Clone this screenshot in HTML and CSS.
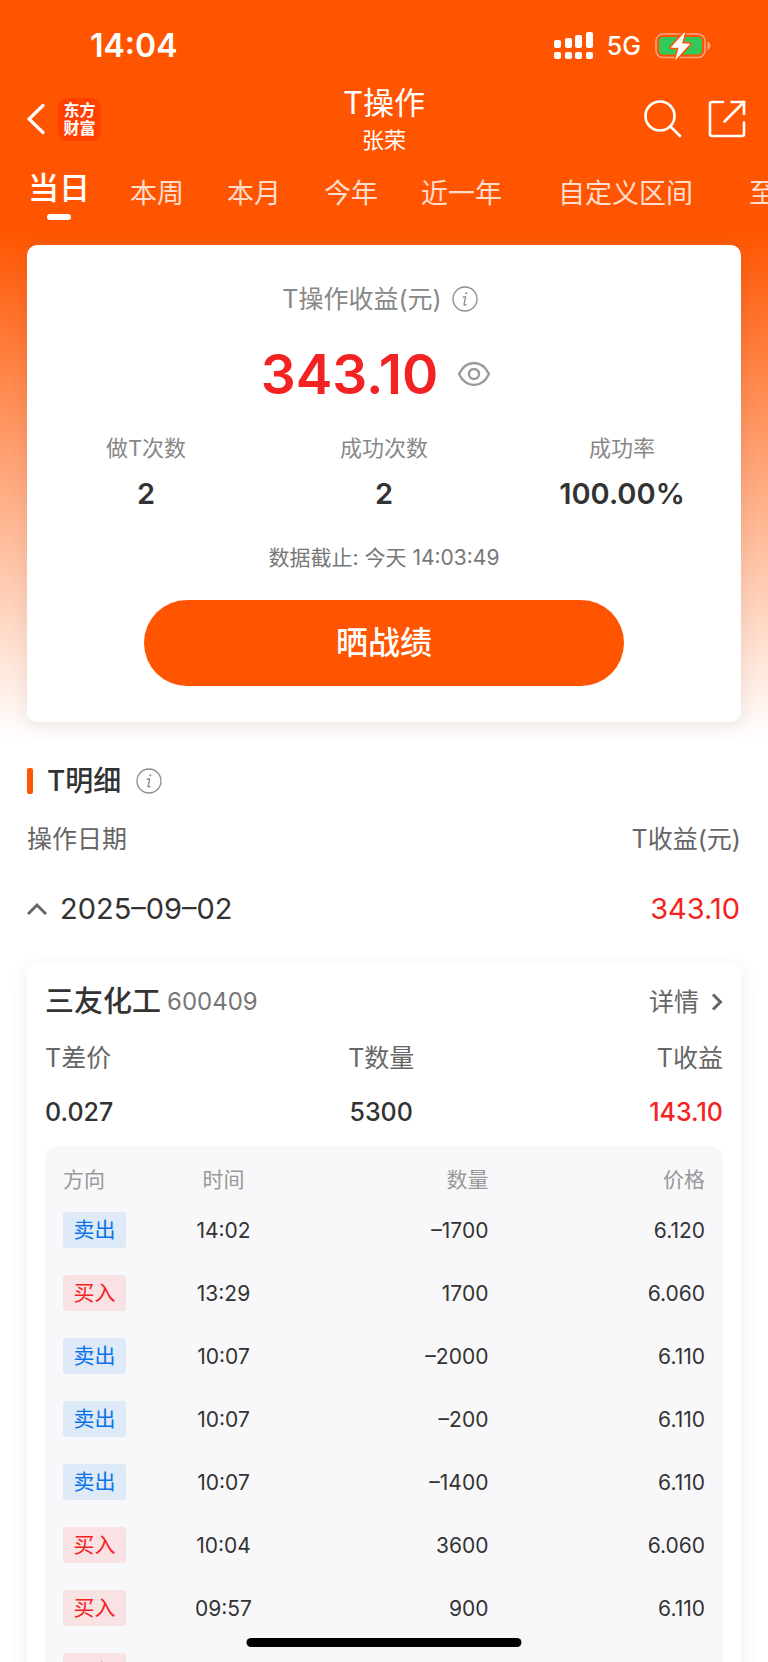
FILE: index.html
```html
<!DOCTYPE html>
<html lang="zh-CN">
<head>
<meta charset="utf-8">
<meta name="viewport" content="width=device-width, initial-scale=1">
<title>T操作</title>
<link rel="stylesheet" href="styles.css">
</head>
<body>
<div class="screen">
  <header class="status">
    <time class="clock">14:04</time>
    <div class="status-icons">
      <svg class="signal" width="40" height="28" viewBox="0 0 40 28" fill="#fff" aria-hidden="true">
        <rect x="0" y="8" width="7" height="8" rx="2"/><rect x="11" y="6" width="7" height="10" rx="2"/><rect x="21" y="3" width="7" height="13" rx="2"/><rect x="32" y="0" width="7" height="16" rx="2"/>
        <rect x="0" y="20" width="7" height="7" rx="2"/><rect x="11" y="20" width="7" height="7" rx="2"/><rect x="21" y="20" width="7" height="7" rx="2"/><rect x="32" y="20" width="7" height="7" rx="2"/>
      </svg>
      <span class="network">5G</span>
      <svg class="battery" width="56" height="28" viewBox="0 0 56 28" aria-hidden="true">
        <rect x="1" y="2" width="49" height="23.5" rx="7" fill="none" stroke="#ffa780" stroke-width="1.6"/>
        <path d="M52.5 9.5c4 1.500 4 7 0 8.500z" fill="#ffa780"/>
        <rect x="4" y="5" width="43" height="17.500" rx="4" fill="#34c759"/>
        <path d="M29.500 .8 16.500 15.300h7.800L20.800 27.200 34.500 12h-8z" fill="#fff" stroke="#ff5500" stroke-width="4" stroke-linejoin="round"/>
        <path d="M29.500 .8 16.500 15.300h7.800L20.800 27.200 34.500 12h-8z" fill="#fff" stroke="#fff" stroke-linejoin="round"/>
      </svg>
    </div>
  </header>

  <nav class="navbar">
    <div class="nav-side nav-left">
      <button class="icon-button" aria-label="返回">
        <svg width="18" height="32" viewBox="0 0 18 32" fill="none" stroke="#fff" stroke-width="3.200" stroke-linecap="round"><path d="M16 2.500 2 16 16 29.500"/></svg>
      </button>
      <a class="brand" href="#"><span>东方</span><span>财富</span></a>
    </div>
    <div class="heading">
      <h1>T操作</h1>
      <p>张荣</p>
    </div>
    <div class="nav-side nav-right">
      <button class="icon-button" aria-label="搜索">
        <svg width="38" height="38" viewBox="0 0 38 38" fill="none" stroke="#fff" stroke-width="2.600" stroke-linecap="round"><circle cx="16" cy="16" r="14.500"/><path d="M26.500 26.500 36 36"/></svg>
      </button>
      <button class="icon-button" aria-label="分享">
        <svg width="38" height="38" viewBox="0 0 38 38" fill="none" stroke="#fff" stroke-width="2.600" stroke-linecap="round" stroke-linejoin="round"><path d="M15 2H4Q2 2 2 4V34Q2 36 4 36H34Q36 36 36 34V22.500"/><path d="M23.500 2H36V14"/><path d="M36 2 16.500 21.500"/></svg>
      </button>
    </div>
  </nav>

  <div class="tabs" role="tablist">
    <button class="tab tab-active" role="tab" aria-selected="true">当日</button>
    <button class="tab" role="tab">本周</button>
    <button class="tab" role="tab">本月</button>
    <button class="tab" role="tab">今年</button>
    <button class="tab" role="tab">近一年</button>
    <button class="tab tab-range" role="tab">自定义区间</button>
    <button class="tab" role="tab">至今</button>
  </div>

  <main class="content">
    <section class="card summary">
      <div class="summary-title">
        <h2>T操作收益(元)</h2>
        <button class="icon-button" aria-label="收益说明">
          <svg width="26" height="26" viewBox="0 0 26 26" fill="none" stroke="#8c8c8c" stroke-width="1.300"><circle cx="13" cy="13" r="12"/><path d="M10.800 11h2.900L12 18.300q-.2 1 2.500 0" stroke-linejoin="round"/><circle cx="14.300" cy="7.300" r=".8" fill="#8c8c8c" stroke-width=".6"/></svg>
        </button>
      </div>
      <div class="amount">
        <strong>343.10</strong>
        <button class="icon-button" aria-label="隐藏金额">
          <svg width="34" height="26" viewBox="0 0 34 26" fill="none" stroke="#999" stroke-width="2.400"><path d="M2 13C5 7 10.500 2 17 2s12 5 15 11c-3 6-8.500 11-15 11S5 19 2 13z" stroke-linejoin="round"/><circle cx="17" cy="13" r="5"/></svg>
        </button>
      </div>
      <dl class="stats">
        <div><dt>做T次数</dt><dd>2</dd></div>
        <div><dt>成功次数</dt><dd>2</dd></div>
        <div><dt>成功率</dt><dd>100.00%</dd></div>
      </dl>
      <p class="as-of">数据截止: 今天 14:03:49</p>
      <button class="share-button">晒战绩</button>
    </section>

    <section class="detail">
      <div class="section-title">
        <h2>T明细</h2>
        <button class="icon-button" aria-label="明细说明">
          <svg width="26" height="26" viewBox="0 0 26 26" fill="none" stroke="#8c8c8c" stroke-width="1.300"><circle cx="13" cy="13" r="12"/><path d="M10.800 11h2.900L12 18.300q-.2 1 2.500 0" stroke-linejoin="round"/><circle cx="14.300" cy="7.300" r=".8" fill="#8c8c8c" stroke-width=".6"/></svg>
        </button>
      </div>
      <div class="list-head"><span>操作日期</span><span>T收益(元)</span></div>
      <button class="day" aria-expanded="true">
        <svg width="20" height="14" viewBox="0 0 20 14" fill="none" stroke="#666" stroke-width="3"><path d="M1 12 10 3l9 9"/></svg>
        <span class="day-date">2025–09–02</span>
        <span class="day-profit">343.10</span>
      </button>

      <article class="card stock">
        <div class="stock-head">
          <h3>三友化工</h3>
          <span class="code">600409</span>
          <a class="more" href="#">详情
            <svg width="12" height="18" viewBox="0 0 12 18" fill="none" stroke="#666" stroke-width="3"><path d="m2 1.500 7.500 7.500L2 16.500"/></svg>
          </a>
        </div>
        <dl class="figures">
          <div><dt>T差价</dt><dd>0.027</dd></div>
          <div><dt>T数量</dt><dd>5300</dd></div>
          <div><dt>T收益</dt><dd class="up">143.10</dd></div>
        </dl>
        <div class="panel">
          <table class="trades">
            <thead><tr><th>方向</th><th>时间</th><th>数量</th><th>价格</th></tr></thead>
            <tbody>
              <tr><td><span class="tag sell">卖出</span></td><td>14:02</td><td>–1700</td><td>6.120</td></tr>
              <tr><td><span class="tag buy">买入</span></td><td>13:29</td><td>1700</td><td>6.060</td></tr>
              <tr><td><span class="tag sell">卖出</span></td><td>10:07</td><td>–2000</td><td>6.110</td></tr>
              <tr><td><span class="tag sell">卖出</span></td><td>10:07</td><td>–200</td><td>6.110</td></tr>
              <tr><td><span class="tag sell">卖出</span></td><td>10:07</td><td>–1400</td><td>6.110</td></tr>
              <tr><td><span class="tag buy">买入</span></td><td>10:04</td><td>3600</td><td>6.060</td></tr>
              <tr><td><span class="tag buy">买入</span></td><td>09:57</td><td>900</td><td>6.110</td></tr>
              <tr><td><span class="tag buy">买入</span></td><td>09:50</td><td>800</td><td>6.080</td></tr>
            </tbody>
          </table>
        </div>
      </article>
    </section>
  </main>
  <div class="home-bar"></div>
</div>
</body>
</html>
```
FILE: styles.css
```css
* { box-sizing: border-box; margin: 0; padding: 0; }

body {
  font-family: Inter, "Noto Sans CJK SC", sans-serif;
  font-size: 25px;
  line-height: 36px;
  color: #333;
  background: #fff;
}

button { font: inherit; color: inherit; background: none; border: 0; cursor: pointer; }
a { color: inherit; text-decoration: none; }
svg { display: block; flex: none; }
h1, h2, h3, th { font-weight: 400; font-size: inherit; }

.screen {
  height: 100vh;
  overflow: hidden;
  background: linear-gradient(#ff5500 230px, #fff 740px);
}

.icon-button { display: flex; }

/* Status bar */
.status {
  display: flex;
  justify-content: space-between;
  align-items: center;
  height: 80px;
  padding: 12px 57px 0 90px;
  color: #fff;
}
.clock { font-size: 32px; font-weight: 600; }
.status-icons { display: flex; align-items: center; }
.network { margin: 0 14px 0 13px; font-size: 25px; font-weight: 500; }

/* Navigation */
.navbar {
  display: grid;
  grid-template-columns: 1fr auto 1fr;
  align-items: center;
  height: 78px;
  padding: 0 22px;
  color: #fff;
}
.nav-side { display: flex; align-items: center; gap: 13px; }
.nav-left { padding-left: 5px; }
.nav-right { justify-content: flex-end; gap: 26px; }
.brand {
  display: flex;
  flex-direction: column;
  justify-content: center;
  width: 43px;
  height: 43px;
  border-radius: 9px;
  background: #ff4000;
  font-size: 16px;
  font-weight: 700;
  line-height: 18px;
  text-align: center;
}
.heading { padding-top: 2px; text-align: center; }
.heading h1 { font-size: 31px; line-height: 40px; }
.heading p { font-size: 22px; line-height: 34px; }

/* Period tabs */
.tabs {
  display: flex;
  align-items: center;
  gap: 43px;
  height: 72px;
  padding-left: 28px;
  overflow: hidden;
  white-space: nowrap;
}
.tab { flex: none; font-size: 27px; color: #ffddcc; }
.tab-active {
  display: flex;
  flex-direction: column;
  align-items: center;
  gap: 8px;
  padding-top: 2px;
  margin-right: -3px;
  font-size: 31px;
  font-weight: 500;
  color: #fff;
}
.tab-active::after { content: ""; width: 24px; height: 6px; border-radius: 3px; background: #fff; }
.tab-range { margin: 0 13px; }

/* Cards */
.content { padding: 15px 27px 0; }
.card {
  border-radius: 10px;
  background: #fff;
  box-shadow: 0 4px 20px rgba(0, 0, 0, 0.08);
}

.summary {
  display: flex;
  flex-direction: column;
  align-items: center;
  padding: 36px 0;
}
.summary-title { display: flex; align-items: center; gap: 10px; padding-right: 8px; color: #888; }
.amount {
  display: flex;
  align-items: center;
  gap: 19px;
  margin-top: 24px;
  padding-right: 16px;
}
.amount strong { font-size: 55px; font-weight: 600; line-height: 66px; color: #f42323; }
.stats {
  display: grid;
  grid-template-columns: repeat(3, 1fr);
  width: 100%;
  margin-top: 23px;
  text-align: center;
}
.stats dt { font-size: 22px; color: #888; }
.stats dd { margin-top: 10px; font-size: 29px; font-weight: 600; }
.as-of { margin-top: 28px; font-size: 21px; color: #777; }
.share-button {
  width: 480px;
  max-width: 90%;
  height: 86px;
  margin-top: 24px;
  border-radius: 43px;
  background: #ff5500;
  font-size: 32px;
  font-weight: 500;
  color: #fff;
}

/* Detail list */
.detail { padding-top: 41px; }
.section-title { display: flex; align-items: center; gap: 15px; }
.section-title h2 {
  display: flex;
  align-items: center;
  gap: 14px;
  font-size: 28px;
  font-weight: 500;
}
.section-title h2::before { content: ""; width: 6px; height: 26px; border-radius: 2px; background: #ff5500; }
.list-head {
  display: flex;
  justify-content: space-between;
  margin-top: 22px;
  color: #666;
}
.day {
  display: flex;
  align-items: center;
  width: 100%;
  margin-top: 34px;
  padding-right: 1px;
  font-size: 29px;
}
.day-date { margin-left: 13px; }
.day-profit { margin-left: auto; color: #f42323; }

.stock { margin-top: 36px; padding: 21px 18px 0; }
.stock-head { display: flex; align-items: center; }
.stock-head h3 { font-size: 29px; font-weight: 500; }
.code { margin-left: 6px; font-size: 24px; color: #777; }
.more { display: flex; align-items: center; gap: 12px; margin-left: auto; color: #666; }
.figures { display: flex; justify-content: space-between; margin-top: 20px; }
.figures div:nth-child(2) { text-align: center; }
.figures div:nth-child(3) { text-align: right; }
.figures dt { color: #666; }
.figures dd { margin-top: 18px; font-size: 25px; font-weight: 500; }
.figures .up { color: #f42323; }

.panel {
  margin-top: 16px;
  padding: 16px 18px 0;
  border-radius: 12px;
  background: #f8f8fa;
}
.trades { width: 100%; border-collapse: collapse; table-layout: fixed; font-size: 21px; }
.trades th { height: 36px; color: #999; }
.trades td { height: 63px; }
.trades td + td { padding-top: 2px; }
.trades tr > :nth-child(1) { width: 18%; text-align: left; }
.trades tr > :nth-child(2) { width: 14%; text-align: center; }
.trades tr > :nth-child(3) { width: 220px; text-align: right; }
.trades tr > :nth-child(4) { text-align: right; }
.tag { display: block; width: 63px; border-radius: 3px; text-align: center; }
.sell { background: #deeaf7; color: #0a73e8; }
.buy { background: #f8e2e4; color: #f42323; }

.home-bar {
  position: fixed;
  bottom: 15px;
  left: 50%;
  width: 275px;
  height: 9px;
  border-radius: 5px;
  background: #000;
  transform: translateX(-50%);
}
```
